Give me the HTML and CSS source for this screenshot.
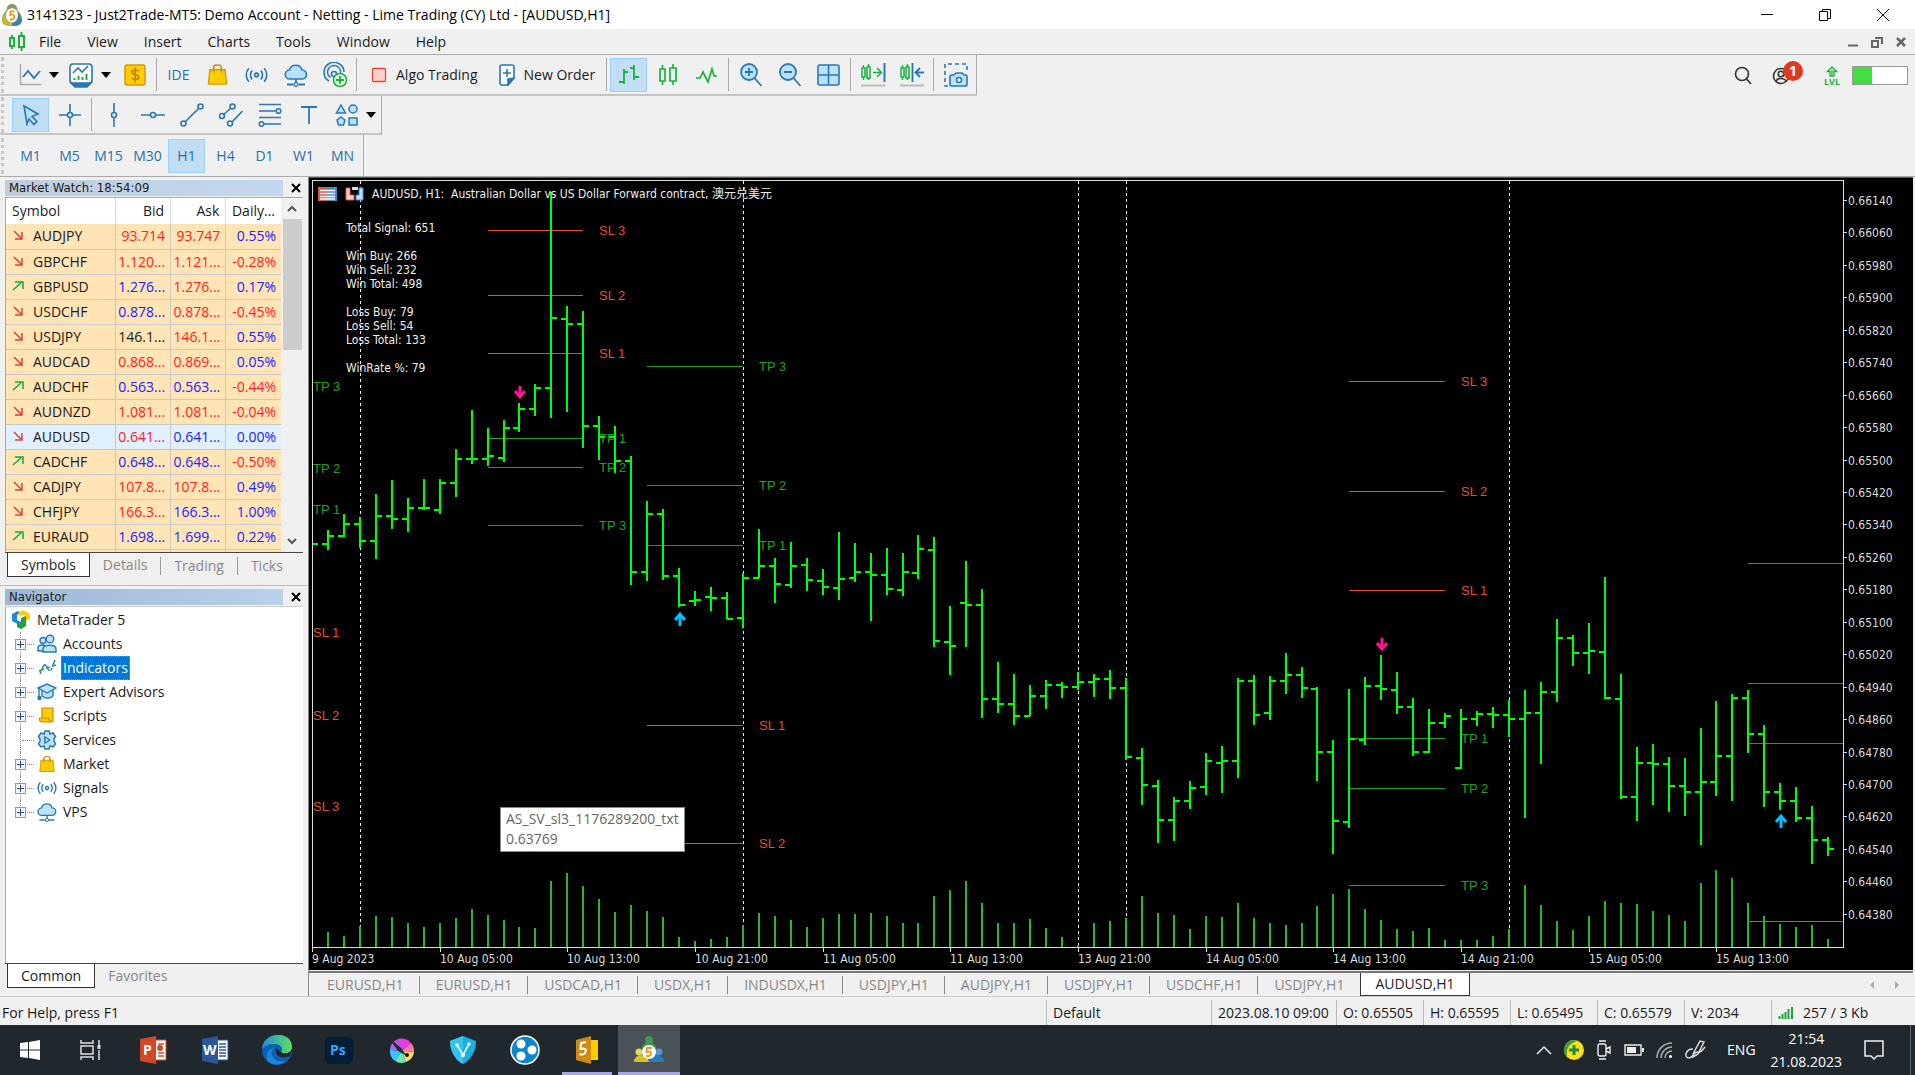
FILE: index.html
```html
<!DOCTYPE html>
<html lang="en">
<head>
	<meta charset="UTF-8">
	<meta name="viewport" content="width=device-width, initial-scale=1.0">
	<title>3141323 - Just2Trade-MT5</title>
	<link rel="stylesheet" href="styles.css">
</head>
<body>

	<!-- shared icons -->
	<svg class="sprite" width="0" height="0">
		<symbol id="i-bag" viewBox="0 0 24 24">
			<path d="M8 9V5a3 3 0 0 1 3-3h2a3 3 0 0 1 3 3v4" fill="none" stroke="#c98f00" stroke-width="1.6"/>
			<path d="M4 7h16l1.500 15h-19z" fill="#ffcc00" stroke="#d39a08" stroke-width="1.400"/>
			<path d="M8 10V5M16 10V5" stroke="#c98f00" stroke-width="1.500"/>
		</symbol>
		<symbol id="i-signal" viewBox="0 0 24 24">
			<g fill="none" stroke="#2a78b0" stroke-width="1.700">
				<circle cx="12" cy="12" r="2" fill="#b9e2ff"/>
				<path d="M7.500 7.500a6.500 6.500 0 0 0 0 9M16.500 7.500a6.500 6.500 0 0 1 0 9M4 5a10.500 10.500 0 0 0 0 14M20 5a10.500 10.500 0 0 1 0 14"/>
			</g>
		</symbol>
		<symbol id="i-cloud" viewBox="0 0 24 24">
			<path d="M6 16a4.500 4.500 0 0 1-.500-9 6.500 6.500 0 0 1 12.500 0 4.500 4.500 0 0 1 0 9z" fill="#b9e2ff" stroke="#2a78b0" stroke-width="1.600"/>
			<path d="M12 16v4M3 21.500h6.500M14.500 21.500H21" stroke="#2a78b0" stroke-width="1.800"/>
			<circle cx="12" cy="21.500" r="1.800" fill="#fff" stroke="#2a78b0" stroke-width="1.300"/>
		</symbol>
		<symbol id="i-down" viewBox="0 0 12 12">
			<path d="M2 2l7 7M10 3v7H3" fill="none" stroke="#d8433a" stroke-width="1.500"/>
		</symbol>
		<symbol id="i-up" viewBox="0 0 12 12">
			<path d="M1 10l8-7M3 2h8v7" fill="none" stroke="#17a53a" stroke-width="1.500"/>
		</symbol>
		<symbol id="i-logo" viewBox="0 0 22 24">
			<path d="M11 0c4 0 6 3 6 7 4 3 5 7 5 11-1 5-6 6-11 6S1 23 0 18c0-4 1-8 5-11 0-4 2-7 6-7z" fill="#8b9b63"/>
			<path d="M4 10c-3 3-5 8-3 11 2 3 7 3 10 3V12z" fill="#c9b53b"/>
			<path d="M18 10c3 3 5 8 3 11-2 3-7 3-10 3V12z" fill="#3f80a8"/>
			<ellipse cx="11" cy="12.500" rx="6.500" ry="8" fill="#fff"/>
			<path d="M14 8H9.500L9 12c3-1.500 5 0 4.500 2.500s-3 3-5 2" fill="none" stroke="#e2a11b" stroke-width="2"/>
		</symbol>
	</svg>

	<header class="titlebar">
		<svg class="app-icon" width="20" height="24"><use href="#i-logo"/></svg>
		<h1>3141323 - Just2Trade-MT5: Demo Account - Netting - Lime Trading (CY) Ltd - [AUDUSD,H1]</h1>
		<div class="window-buttons">
			<button aria-label="Minimize"><svg width="14" height="14"><path d="M1 6.500h12" stroke="#000"/></svg></button>
			<button aria-label="Restore"><svg width="14" height="14" fill="none" stroke="#000"><path d="M1.500 3.500h8v9h-8zM4.500 3.500v-2h8v9h-3"/></svg></button>
			<button aria-label="Close"><svg width="14" height="14"><path d="M1 1l12 12M13 1L1 13" stroke="#000"/></svg></button>
		</div>
	</header>

	<nav class="menubar">
		<svg width="18" height="20" viewBox="0 0 18 20" fill="none" stroke="#19b33c" stroke-width="2"><path d="M2 6h4v8H2zM4 3v3M4 14v3M11 4h5v11h-5zM13.500 0v4M13.500 15v4"/></svg>
		<button>File</button>
		<button>View</button>
		<button>Insert</button>
		<button>Charts</button>
		<button>Tools</button>
		<button>Window</button>
		<button>Help</button>
		<div class="child-buttons">
			<button aria-label="Minimize chart"><svg width="12" height="12"><path d="M1 9.500h10" stroke="#666" stroke-width="2"/></svg></button>
			<button aria-label="Restore chart"><svg width="12" height="12" fill="none" stroke="#666" stroke-width="2"><path d="M1 5h6v6H1zM4 2h7v6"/></svg></button>
			<button aria-label="Close chart"><svg width="12" height="12"><path d="M2 2l8 8M10 2l-8 8" stroke="#666" stroke-width="2.500"/></svg></button>
		</div>
	</nav>

	<div class="toolbar-row">
		<div class="toolbar">
			<button class="tool combo" aria-label="Line studies">
				<svg width="24" height="24" fill="none"><path d="M2.500 1v20.500H23" stroke="#aaa" stroke-width="1.500"/><path d="M5 14l5-6 6 7 6-7" stroke="#2a78b0" stroke-width="1.800"/></svg>
				<i class="caret"></i>
			</button>
			<button class="tool combo" aria-label="Profiles">
				<svg width="26" height="26" fill="none" stroke="#2a78b0" stroke-width="1.600"><path d="M3 21h20l-4 4H7z" fill="#2a78b0"/><rect x="2" y="2" width="22" height="19" rx="3" fill="#fff"/><path d="M5 11l5-5 4 4 6-6"/><path d="M6.500 16v2M10.500 14v4M14.500 15v3M18.500 12v6" stroke="#19b33c" stroke-width="2"/></svg>
				<i class="caret"></i>
			</button>
			<button class="tool" aria-label="Market Watch">
				<svg width="22" height="22"><rect x="1" y="1" width="20" height="20" rx="2" fill="#fc0" stroke="#d39a08" stroke-width="1.500"/><path d="M14.500 7.500c-1-2-6.500-2-6.500.700 0 3.300 6.800 1.800 6.800 5 0 2.800-5.800 3-7 .500M11.300 3.500v15" fill="none" stroke="#b98300" stroke-width="1.500"/></svg>
			</button>
			<span class="sep"></span>
			<button class="tool ide">IDE</button>
			<button class="tool" aria-label="Market"><svg width="23" height="23"><use href="#i-bag"/></svg></button>
			<button class="tool" aria-label="Signals"><svg width="23" height="24"><use href="#i-signal"/></svg></button>
			<button class="tool" aria-label="VPS"><svg width="24" height="24"><use href="#i-cloud"/></svg></button>
			<button class="tool" aria-label="Virtual hosting">
				<svg width="26" height="26" fill="none" stroke="#2a78b0" stroke-width="1.600"><path d="M7 19A10 10 0 1 1 22 10M8.500 15.500A6.500 6.500 0 1 1 18.500 11"/><circle cx="12" cy="12" r="2.500"/><circle cx="18" cy="18" r="6.500" fill="#eaffea" stroke="#19b33c"/><path d="M18 14v8M14 18h8" stroke="#19b33c" stroke-width="1.800"/></svg>
			</button>
			<span class="sep"></span>
			<button class="tool text-tool"><svg width="16" height="16"><rect x="1.500" y="1.500" width="13" height="13" rx="1" fill="#ffd3cc" stroke="#e0443a" stroke-width="1.300"/></svg>Algo Trading</button>
			<button class="tool text-tool"><svg width="16" height="22" fill="none" stroke="#2a78b0" stroke-width="1.600"><path d="M3 1h10a2 2 0 0 1 2 2v11l-6 7H3a2 2 0 0 1-2-2V3a2 2 0 0 1 2-2z" fill="#fff"/><path d="M15 14l-6 7v-6z" fill="#2a78b0"/><path d="M4 9h8M8 5v8"/></svg>New Order</button>
			<span class="sep"></span>
			<button class="tool active" aria-label="Bar chart"><svg width="24" height="24" fill="none" stroke="#19b33c" stroke-width="1.800"><path d="M7 6v15M2 19h5M7 9h4M17 2v15M13 5h4M17 14h5"/></svg></button>
			<button class="tool" aria-label="Candlesticks"><svg width="20" height="22" fill="none" stroke="#19b33c" stroke-width="1.700"><path d="M2 5h5v12H2zM4.500 1v4M4.500 17v4M12 4h6v13h-6zM15 0v4M15 17v4"/></svg></button>
			<button class="tool" aria-label="Line chart"><svg width="24" height="20" fill="none" stroke="#19b33c" stroke-width="1.700"><path d="M1 13h4l3-6 5 10 4-13 2 7h3"/></svg></button>
			<span class="sep"></span>
			<button class="tool" aria-label="Zoom in"><svg width="24" height="24" fill="none" stroke="#2a78b0" stroke-width="1.800"><circle cx="10" cy="9" r="8" fill="#b9e2ff"/><path d="M6 9h8M10 5v8M15.500 15l7 8"/></svg></button>
			<button class="tool" aria-label="Zoom out"><svg width="24" height="24" fill="none" stroke="#2a78b0" stroke-width="1.800"><circle cx="10" cy="9" r="8" fill="#b9e2ff"/><path d="M6 9h8M15.500 15l7 8"/></svg></button>
			<button class="tool" aria-label="Tile windows"><svg width="24" height="24" fill="none" stroke="#2a78b0" stroke-width="1.600"><rect x="1" y="2" width="21" height="20" rx="2" fill="#b9e2ff"/><path d="M11.500 2v20M1 12h21"/></svg></button>
			<span class="sep"></span>
			<button class="tool" aria-label="Auto scroll"><svg width="26" height="26" fill="none" stroke="#19b33c" stroke-width="1.500"><path d="M2 6h3v9H2zM3.500 3v3M3.500 15v3M7 5h3v11H7zM8.500 2v3M8.500 16v2M13 10.500h8M17 6l4.500 4.500L17 15"/><path d="M24.500 1v19" stroke="#2a78b0" stroke-width="2"/><path d="M1 23.500h24" stroke="#bbb" stroke-width="2"/></svg></button>
			<button class="tool" aria-label="Chart shift"><svg width="26" height="26" fill="none" stroke="#19b33c" stroke-width="1.500"><path d="M2 6h3v9H2zM3.500 3v3M3.500 15v3M7 5h3v11H7zM8.500 2v3M8.500 16v2"/><path d="M13.500 1v19M25 10.500h-8M21 6l-4.500 4.500L21 15" stroke="#2a78b0" stroke-width="1.800"/><path d="M1 23.500h24" stroke="#bbb" stroke-width="2"/></svg></button>
			<span class="sep"></span>
			<button class="tool" aria-label="Screenshot"><svg width="26" height="26" fill="none" stroke="#2a78b0" stroke-width="1.600"><path d="M5 24H2V2h22v7" stroke-dasharray="4 3"/><path d="M8 24a1 1 0 0 1-1-1v-8a2 2 0 0 1 2-2h2l2-2h6l2 2h2a2 2 0 0 1 1 2v8a1 1 0 0 1-1 1z" fill="#b9e2ff"/><circle cx="16" cy="18" r="2.500" fill="#fff"/></svg></button>
		</div>
		<div class="account-tools">
			<button aria-label="Search"><svg width="18" height="20" fill="none" stroke="#333" stroke-width="1.600"><circle cx="8" cy="8" r="6.500"/><path d="M12.500 13l4.500 5"/></svg></button>
			<button class="profile" aria-label="Profile"><svg width="18" height="18" fill="none" stroke="#333" stroke-width="1.600"><circle cx="9" cy="9" r="7.500"/><circle cx="9" cy="7" r="2.700"/><path d="M4 14.500c1-4 9-4 10 0"/></svg><span class="badge">1</span></button>
			<button class="lvl" aria-label="Level"><svg width="12" height="11"><path d="M6 1l4.500 4.500H8V10H4V5.500H1.500zM6 4v5" fill="none" stroke="#19b33c" stroke-width="1.300"/></svg><span>LVL</span></button>
			<div class="meter"><span></span></div>
		</div>
	</div>

	<div class="toolbar-row drawing">
		<div class="toolbar">
			<button class="tool active" aria-label="Cursor"><svg width="20" height="22"><path d="M3 2l14 8-6 2.500 5 5-3 3-5-5.500-2 5z" fill="#b9e2ff" stroke="#2a78b0" stroke-width="1.600"/></svg></button>
			<button class="tool" aria-label="Crosshair"><svg width="22" height="22" fill="none" stroke="#2a78b0" stroke-width="1.600"><path d="M11 0v8M11 14v8M0 11h8M14 11h8"/><circle cx="11" cy="11" r="2.500"/></svg></button>
			<span class="sep"></span>
			<button class="tool" aria-label="Vertical line"><svg width="22" height="24" fill="none" stroke="#2a78b0" stroke-width="1.600"><path d="M11 0v9M11 15v9"/><circle cx="11" cy="12" r="2.500"/></svg></button>
			<button class="tool" aria-label="Horizontal line"><svg width="24" height="22" fill="none" stroke="#2a78b0" stroke-width="1.600"><path d="M0 11h9M15 11h9"/><circle cx="12" cy="11" r="2.500"/></svg></button>
			<button class="tool" aria-label="Trendline"><svg width="24" height="24" fill="none" stroke="#2a78b0" stroke-width="1.600"><path d="M5 19L19 5"/><circle cx="3.500" cy="20.500" r="2.500"/><circle cx="20.500" cy="3.500" r="2.500"/></svg></button>
			<button class="tool" aria-label="Channel"><svg width="24" height="24" fill="none" stroke="#2a78b0" stroke-width="1.600"><path d="M4 12l8-7M13 19L23.500 8"/><circle cx="3" cy="13" r="2.500"/><circle cx="13.500" cy="3.500" r="2.500"/><circle cx="11" cy="20.500" r="2.500"/></svg></button>
			<button class="tool" aria-label="Fibonacci"><svg width="24" height="24" fill="none" stroke="#2a78b0" stroke-width="1.600"><path d="M1 1.500h22M1 8h17M1 14.500h22M6 21h17"/><circle cx="20.500" cy="8" r="2.300"/><circle cx="3.500" cy="21" r="2.300"/></svg></button>
			<button class="tool" aria-label="Text"><svg width="18" height="20"><path d="M1 2h16M9 2v17" stroke="#2a78b0" stroke-width="1.800"/></svg></button>
			<button class="tool combo" aria-label="Shapes"><svg width="24" height="24" fill="#b9e2ff" stroke="#2a78b0" stroke-width="1.500"><path d="M6 2l4.500 8h-9z"/><circle cx="18" cy="6" r="4"/><path d="M6 14l4 3-1.500 5h-5L2 17z"/><rect x="14" y="15" width="8" height="7"/></svg><i class="caret"></i></button>
		</div>
	</div>

	<div class="toolbar-row">
		<div class="toolbar periods">
			<button class="tool">M1</button>
			<button class="tool">M5</button>
			<button class="tool">M15</button>
			<button class="tool">M30</button>
			<button class="tool active">H1</button>
			<button class="tool">H4</button>
			<button class="tool">D1</button>
			<button class="tool">W1</button>
			<button class="tool">MN</button>
		</div>
	</div>

	<main>
		<aside>
			<section class="panel market-watch">
				<h2><span>Market Watch: 18:54:09</span><button aria-label="Close Market Watch"><svg width="10" height="10"><path d="M1 1l8 8M9 1L1 9" stroke="#000" stroke-width="2"/></svg></button></h2>
				<div class="watch-body">
					<div class="watch-scroll">
						<table>
							<thead>
								<tr><th class="symbol">Symbol</th><th>Bid</th><th>Ask</th><th>Daily...</th></tr>
							</thead>
							<tbody id="quotes"></tbody>
						</table>
					</div>
					<div class="scrollbar">
						<button aria-label="Scroll up"><svg width="10" height="7"><path d="M1 6l4-4 4 4" fill="none" stroke="#555" stroke-width="2"/></svg></button>
						<div class="thumb"></div>
						<button aria-label="Scroll down"><svg width="10" height="7"><path d="M1 1l4 4 4-4" fill="none" stroke="#555" stroke-width="2"/></svg></button>
					</div>
				</div>
				<div class="panel-tabs">
					<button class="current">Symbols</button>
					<button>Details</button>
					<button>Trading</button>
					<button>Ticks</button>
				</div>
			</section>

			<section class="panel navigator">
				<h2><span>Navigator</span><button aria-label="Close Navigator"><svg width="10" height="10"><path d="M1 1l8 8M9 1L1 9" stroke="#000" stroke-width="2"/></svg></button></h2>
				<div class="tree">
					<div class="root">
						<svg width="20" height="20" viewBox="0 0 20 20"><path d="M1 4l6-3 3 2-4 2v5l4 2v4L1 11z" fill="#1f86d8"/><path d="M7 3l5-3 7 4v5l-4 2V6l-3-1-3 1z" fill="#fc0"/><path d="M10 8l5-2v10l-5 3-4-2v-4l4 1z" fill="#19a53a"/></svg>
						MetaTrader 5
					</div>
					<ul>
						<li><i class="plus"></i><svg width="20" height="20" viewBox="0 0 20 20" fill="#b9e2ff" stroke="#2a78b0" stroke-width="1.400"><circle cx="6" cy="6.500" r="3"/><path d="M1 17v-3c0-4 8-4 9 0v3z"/><circle cx="13" cy="5" r="3.800"/><path d="M6 18v-3c0-5 13-5 13 0v3z"/></svg><span>Accounts</span></li>
						<li class="selected"><i class="plus"></i><svg width="20" height="20" viewBox="0 0 20 20" fill="none" stroke-width="1.500"><path d="M3 16l3-7c2-4 3-2 5 2s4 0 5-4l2-5" stroke="#2a78b0" stroke-dasharray="3 1 14 1"/><path d="M2 13l5-2M9 10l4-1M15 8l4-1" stroke="#19b33c"/></svg><span>Indicators</span></li>
						<li><i class="plus"></i><svg width="20" height="20" viewBox="0 0 20 20" fill="#b9e2ff" stroke="#2a78b0" stroke-width="1.400"><path d="M5 8v6c3 3 8 3 11 0V8"/><path d="M1 6l9-4 9 4-9 5z"/><path d="M2 6v9" fill="none"/><circle cx="2.500" cy="16" r="1.500" fill="#2a78b0"/></svg><span>Expert Advisors</span></li>
						<li><i class="plus"></i><svg width="20" height="20" viewBox="0 0 20 20" fill="#fc0" stroke="#c98f00" stroke-width="1.200"><path d="M5 2h11v13H5z"/><path d="M3 12h9v4h4H5c-3 0-3-4-2-4z"/></svg><span>Scripts</span></li>
						<li class="leaf"><i></i><svg width="20" height="20" viewBox="0 0 20 20" fill="#b9e2ff" stroke="#2a78b0" stroke-width="1.500"><path d="M8 1h4l1 3 3-1 2.500 3.500L17 9v2l1.500 3-2.500 3-3-1-1 3H8l-1-3-3 1-2.500-3L3 11V9L1.500 6.500 4 3l3 1z"/><path d="M8 7l4.500 3L8 13z" fill="#fff"/></svg><span>Services</span></li>
						<li><i class="plus"></i><svg width="20" height="18"><use href="#i-bag"/></svg><span>Market</span></li>
						<li><i class="plus"></i><svg width="20" height="20"><use href="#i-signal"/></svg><span>Signals</span></li>
						<li><i class="plus"></i><svg width="20" height="20"><use href="#i-cloud"/></svg><span>VPS</span></li>
					</ul>
				</div>
				<div class="panel-tabs">
					<button class="current">Common</button>
					<button>Favorites</button>
				</div>
			</section>
		</aside>

		<section class="charts">
			<div class="chart">
				<svg id="chart"></svg>
				<div class="chart-title">
					<svg width="19" height="14"><rect width="9" height="14" fill="#e2574c"/><rect x="9" width="10" height="14" fill="#3b8fd0"/><path d="M2 3.500h15M2 6.500h15M2 9.500h15M2 12h15" stroke="#fff" stroke-width="1.500"/></svg>
					<svg width="19" height="14"><path d="M1 1h4v7h4v5H1z" fill="#ffd3cc" stroke="#e2574c"/><path d="M14 1h4v12h-7V8h3z" fill="#b9e2ff" stroke="#3b8fd0"/><path d="M7 0h6v3H7z" fill="#ddd"/></svg>
					<span>AUDUSD, H1:&nbsp; Australian Dollar vs US Dollar Forward contract, 澳元兑美元</span>
				</div>
				<div class="stats">
					<p>Total Signal: 651</p>
					<p>Win Buy: 266<br>Win Sell: 232<br>Win Total: 498</p>
					<p>Loss Buy: 79<br>Loss Sell: 54<br>Loss Total: 133</p>
					<p>WinRate %: 79</p>
				</div>
				<div class="tooltip">AS_SV_sl3_1176289200_txt<br>0.63769</div>
			</div>
			<div class="chart-tabs">
				<button>EURUSD,H1</button>
				<button>EURUSD,H1</button>
				<button>USDCAD,H1</button>
				<button>USDX,H1</button>
				<button>INDUSDX,H1</button>
				<button>USDJPY,H1</button>
				<button>AUDJPY,H1</button>
				<button>USDJPY,H1</button>
				<button>USDCHF,H1</button>
				<button>USDJPY,H1</button>
				<button class="current">AUDUSD,H1</button>
				<div class="tab-arrows"><i class="prev"></i><i class="next"></i></div>
			</div>
		</section>
	</main>

	<div class="statusbar">
		<span class="help">For Help, press F1</span>
		<span class="profile-name">Default</span>
		<span class="date">2023.08.10 09:00</span>
		<span>O: 0.65505</span>
		<span>H: 0.65595</span>
		<span>L: 0.65495</span>
		<span>C: 0.65579</span>
		<span>V: 2034</span>
		<span class="traffic"><svg width="16" height="14"><path d="M1.500 10v3M4.500 8v5M7.500 6v7M10.500 3v10" stroke="#19a53a" stroke-width="2"/><path d="M14 1v12" stroke="#19a53a" stroke-width="2"/></svg>257 / 3 Kb</span>
	</div>

	<footer class="taskbar">
		<button class="start" aria-label="Start"><svg width="20" height="20" fill="#fff"><path d="M0 3l8-1v7.500H0zM9 2l11-2v9.500H9zM0 10.500h8V18l-8-1zM9 10.500h11V20L9 18z"/></svg></button>
		<button aria-label="Task view"><svg width="22" height="20" fill="none" stroke="#ddd" stroke-width="1.500"><path d="M1 0v3h12V0M1 6h12v8H1zM1 20v-3h12v3M19 0v5M19 10v10"/><path d="M19 5v4" stroke-width="3"/></svg></button>
		<button aria-label="PowerPoint"><svg width="28" height="28" viewBox="0 0 28 28"><path d="M16 4h11v20H16z" fill="#fff" stroke="#d24726"/><path d="M19 8h6M19 17h6M19 20h6" stroke="#d24726" stroke-width="1.500"/><circle cx="21" cy="12" r="3" fill="#d24726"/><path d="M1 3l16-3v28L1 25z" fill="#d24726"/><text x="4" y="19" class="office">P</text></svg></button>
		<button aria-label="Word"><svg width="28" height="28" viewBox="0 0 28 28"><path d="M16 4h11v20H16z" fill="#fff" stroke="#2b579a"/><path d="M18 8h7M18 11h7M18 14h7M18 17h7M18 20h7" stroke="#2b579a" stroke-width="1.500"/><path d="M1 3l16-3v28L1 25z" fill="#2b579a"/><text x="2" y="19" class="office">W</text></svg></button>
		<button aria-label="Edge"><svg width="30" height="30" viewBox="0 0 30 30">
			<defs><linearGradient id="edge"><stop offset="0" stop-color="#1c8fdc"/><stop offset="1" stop-color="#5fe05a"/></linearGradient></defs>
			<circle cx="15" cy="15" r="15" fill="#0c5fb3"/><path d="M0 14C1-4 30-5 30 12c0 7-10 8-11 5 3-4-1-8-6-8C7 9 2 11 0 14z" fill="url(#edge)"/><path d="M12 13c-6 6 0 16 12 13-4 4-12 5-17 1S6 13 12 13z" fill="#1b86dd"/><path d="M14 13c-2 7 5 12 14 8l2-7c-3 6-10 5-11 3z" fill="#20282d"/></svg></button>
		<button aria-label="Photoshop"><svg width="28" height="27"><rect width="28" height="27" rx="5" fill="#001e36"/><text x="5" y="18" class="ps">Ps</text></svg></button>
		<button aria-label="Krita"><svg width="28" height="28" viewBox="0 0 28 28"><path d="M15 15L9 4A12 12 0 0 1 24 7z" fill="#e83be8"/><path d="M15 15l9-8a12 12 0 0 1 3 9z" fill="#ff7aa0"/><path d="M15 15l12 1a12 12 0 0 1-8 10z" fill="#ffd76a"/><path d="M15 15l4 11a12 12 0 0 1-11-1z" fill="#69e7b0"/><path d="M15 15l-7 10a12 12 0 0 1-5-11z" fill="#3bc6ff"/><path d="M15 15L3 14A12 12 0 0 1 9 4z" fill="#a46bff"/><path d="M0 0l14 12 6 8-9-5z" fill="#222b33"/><circle cx="20" cy="19" r="2" fill="#111"/></svg></button>
		<button aria-label="VPN"><svg width="28" height="28" viewBox="0 0 28 28"><path d="M14 0l13 5c0 10-5 19-13 23C6 24 1 15 1 5z" fill="#18b0e2"/><path d="M14 0v28C6 24 1 15 1 5z" fill="#35c3ee"/><path d="M8 9l6 10 6-11" fill="none" stroke="#e4f7ff" stroke-width="1.600"/><g fill="#e4f7ff"><circle cx="8" cy="9" r="1.800"/><circle cx="14" cy="19" r="2.200"/><circle cx="20" cy="8" r="1.800"/></g></svg></button>
		<button aria-label="Remote"><svg width="30" height="30"><circle cx="15" cy="15" r="14" fill="#0c85cf" stroke="#fff" stroke-width="1.500"/><g fill="#fff"><circle cx="11" cy="9" r="4.500"/><circle cx="22" cy="15" r="4.500"/><circle cx="11" cy="21" r="4.500"/></g></svg></button>
		<button class="running" aria-label="MetaEditor"><svg width="24" height="28" viewBox="0 0 24 28"><path d="M12 4h11v20H12z" fill="#fc0"/><path d="M1 4l15-4v28L1 24z" fill="#d08a10"/><path d="M11 6L6 7l-.500 6c4-1.500 6 0 5 3s-4 3-6 2" fill="none" stroke="#fff" stroke-width="2"/></svg></button>
		<button class="running focused" aria-label="MetaTrader"><svg width="30" height="28" viewBox="0 0 30 28"><circle cx="15" cy="4" r="4" fill="#3f9a50"/><path d="M8 12c0-7 14-7 14 0v4H8z" fill="#3f9a50"/><circle cx="5" cy="16" r="3.500" fill="#e6d560"/><path d="M0 26c0-9 14-9 15 0z" fill="#d9c22a"/><circle cx="25" cy="16" r="3.500" fill="#4f97d6"/><path d="M15 26c0-9 15-9 15 0z" fill="#2c7cc0"/><circle cx="15" cy="16" r="7" fill="#fff"/><path d="M18 12h-5l-.500 4c4-1 5 0 4.500 2s-3 2.500-5 1.500" fill="none" stroke="#eba019" stroke-width="2"/></svg></button>

		<div class="tray">
			<button aria-label="Hidden icons"><svg width="16" height="10"><path d="M1 9l7-7 7 7" fill="none" stroke="#eee" stroke-width="1.500"/></svg></button>
			<button aria-label="Updater"><svg width="20" height="20"><circle cx="10" cy="10" r="10" fill="#ffdf1b"/><path d="M10 0a10 10 0 0 0-7 17c-1-9 2-13 10-16z" fill="#3aa13a"/><path d="M10 5v10M5 10h10" stroke="#1b8b3a" stroke-width="3"/></svg></button>
			<button aria-label="Meet now"><svg width="16" height="20" fill="none" stroke="#eee" stroke-width="1.400"><rect x="2" y="4" width="8" height="12" rx="2"/><path d="M10 9l4-2v6l-4-2M3 1h7M3 19h7"/></svg></button>
			<button aria-label="Battery"><svg width="20" height="12"><path d="M1 1h16v10H1z" fill="none" stroke="#eee" stroke-width="1.400"/><path d="M3 3h9v6H3zM18 4h2v4h-2z" fill="#eee"/></svg></button>
			<button aria-label="Network"><svg width="17" height="17" fill="none" stroke="#aaa" stroke-width="1.500"><path d="M1 16A15 15 0 0 1 16 1M5 16A11 11 0 0 1 16 5M9 16a7 7 0 0 1 7-7"/><circle cx="14.500" cy="14.500" r="1.500" fill="#fff" stroke="none"/></svg></button>
			<button aria-label="Pen"><svg width="22" height="20" fill="none" stroke="#ddd" stroke-width="1.500"><path d="M8 14L15 1l4 1-6 12-5 3zM8 9c-8 0-9 9-4 9s5-7 8-6 4 0 8-5"/></svg></button>
			<span class="lang">ENG</span>
			<span class="clock">21:54<br>21.08.2023</span>
			<button aria-label="Notifications"><svg width="20" height="22"><path d="M1 2h18v15h-6l-3 3-3-3H1z" fill="none" stroke="#eee" stroke-width="1.500"/></svg></button>
			<span class="peek"></span>
		</div>
	</footer>

	<script type="text/javascript">

		// symbol, direction, bid, ask, daily change, colors of bid and ask
		const quotes = [
			['AUDJPY', 'down', '93.714', '93.747', '0.55%', 'red', 'red'],
			['GBPCHF', 'down', '1.120...', '1.121...', '-0.28%', 'red', 'red'],
			['GBPUSD', 'up', '1.276...', '1.276...', '0.17%', 'blue', 'red'],
			['USDCHF', 'down', '0.878...', '0.878...', '-0.45%', 'blue', 'red'],
			['USDJPY', 'down', '146.1...', '146.1...', '0.55%', 'black', 'red'],
			['AUDCAD', 'down', '0.868...', '0.869...', '0.05%', 'red', 'red'],
			['AUDCHF', 'up', '0.563...', '0.563...', '-0.44%', 'blue', 'blue'],
			['AUDNZD', 'down', '1.081...', '1.081...', '-0.04%', 'red', 'red'],
			['AUDUSD', 'down', '0.641...', '0.641...', '0.00%', 'red', 'blue'],
			['CADCHF', 'up', '0.648...', '0.648...', '-0.50%', 'blue', 'blue'],
			['CADJPY', 'down', '107.8...', '107.8...', '0.49%', 'red', 'red'],
			['CHFJPY', 'down', '166.3...', '166.3...', '1.00%', 'red', 'blue'],
			['EURAUD', 'up', '1.698...', '1.699...', '0.22%', 'blue', 'blue']
		]

		document.getElementById('quotes').innerHTML = quotes.map(([name, dir, bid, ask, daily, bidColor, askColor]) => `
			<tr class="${name === 'AUDUSD' ? 'selected' : ''}">
				<td class="symbol"><svg width="12" height="12"><use href="#i-${dir}"/></svg>${name}</td>
				<td class="${bidColor}">${bid}</td>
				<td class="${askColor}">${ask}</td>
				<td class="${daily[0] === '-' ? 'red' : 'blue'}">${daily}</td>
			</tr>`).join('') + '<tr><td class="symbol"></td><td></td><td></td><td></td></tr>'


		// high, low, open, close, volume. Levels are in chart units from the top, volume from the bottom
		const bars = [
			[365, 367, 366, 366, 0], [352, 372, 366, 358, 15], [336, 359, 358, 346, 11], [339, 370, 346, 363, 21],
			[316, 381, 363, 338, 31], [302, 351, 338, 341, 30], [320, 354, 341, 330, 24], [301, 332, 330, 330, 20],
			[301, 336, 332, 305, 24], [271, 319, 305, 281, 29], [232, 286, 281, 281, 38], [250, 288, 281, 278, 32],
			[242, 284, 280, 250, 27], [225, 254, 250, 231, 20], [206, 238, 231, 210, 19], [14, 240, 210, 140, 66],
			[128, 234, 141, 146, 74], [133, 270, 146, 248, 61], [238, 282, 248, 259, 48], [248, 295, 259, 283, 35],
			[278, 406, 283, 394, 42], [323, 402, 394, 336, 36], [331, 401, 336, 397, 30], [390, 428, 397, 426, 10],
			[412, 427, 422, 421, 6], [408, 432, 418, 419, 8], [413, 440, 419, 440, 10], [395, 449, 439, 399, 22],
			[351, 399, 399, 388, 34], [380, 424, 388, 405, 31], [364, 409, 406, 388, 27], [380, 412, 387, 401, 20],
			[391, 416, 402, 408, 29], [354, 421, 409, 400, 33], [365, 403, 399, 394, 33], [375, 442, 394, 396, 34],
			[370, 416, 396, 410, 31], [375, 417, 411, 394, 24], [357, 400, 395, 371, 24], [359, 468, 372, 462, 51],
			[427, 496, 463, 467, 57], [383, 468, 424, 426, 66], [410, 539, 426, 520, 44], [483, 534, 520, 525, 24],
			[495, 546, 525, 537, 24], [506, 537, 537, 517, 28], [501, 530, 517, 506, 19], [503, 519, 506, 508, 10],
			[493, 511, 508, 503, 2], [495, 518, 503, 500, 24], [491, 520, 500, 509, 26], [499, 581, 509, 578, 29],
			[569, 626, 579, 606, 51], [601, 664, 607, 641, 34], [618, 662, 641, 622, 32], [602, 630, 622, 609, 18],
			[574, 616, 608, 582, 31], [567, 614, 584, 582, 30], [499, 599, 582, 502, 44], [496, 546, 502, 536, 29],
			[497, 541, 534, 502, 24], [474, 515, 502, 496, 22], [488, 519, 496, 509, 24], [508, 602, 510, 573, 41],
			[561, 675, 573, 642, 53], [510, 649, 643, 560, 58], [498, 566, 561, 507, 38], [476, 521, 507, 510, 27],
			[493, 535, 511, 528, 18], [519, 577, 528, 573, 16], [530, 574, 573, 544, 19], [534, 549, 544, 537, 7],
			[530, 590, 589, 540, 7], [532, 547, 540, 535, 7], [528, 549, 535, 536, 11], [521, 558, 536, 540, 18],
			[511, 639, 540, 534, 62], [503, 585, 534, 513, 42], [440, 523, 513, 459, 26], [456, 487, 459, 474, 17],
			[444, 495, 474, 472, 31], [398, 520, 473, 519, 46], [495, 620, 520, 618, 44], [568, 642, 618, 584, 43],
			[565, 626, 584, 585, 36], [578, 633, 585, 607, 32], [579, 637, 607, 613, 26], [549, 666, 613, 603, 64],
			[522, 617, 603, 577, 77], [515, 622, 577, 519, 69], [511, 574, 519, 555, 44], [546, 628, 555, 613, 31],
			[604, 631, 613, 622, 23], [608, 643, 622, 639, 20], [627, 685, 639, 661, 22], [658, 677, 661, 670, 8]
		]

		const separators = [3, 27, 48, 51, 75]

		// text, first bar, last bar, level
		const levels = [
			['SL 3', 11, 17, 52], ['SL 2', 11, 17, 117], ['SL 1', 11, 17, 175],
			['TP 1', 11, 17, 260], ['TP 2', 11, 17, 289], ['TP 3', 11, 17, 347],
			['TP 3', 21, 27, 188], ['TP 2', 21, 27, 307], ['TP 1', 21, 27, 367],
			['SL 1', 21, 27, 546], ['SL 2', 21, 27, 664],
			['SL 3', 65, 71, 203], ['SL 2', 65, 71, 313], ['SL 1', 65, 71, 411],
			['TP 1', 65, 71, 559], ['TP 2', 65, 71, 609], ['TP 3', 65, 71, 706],
			['TP', 90, 96, 385], ['TP', 90, 96, 504], ['TP', 90, 96, 564], ['SL', 90, 96, 742],
			['TP 3', -7, -1, 208], ['TP 2', -7, -1, 290], ['TP 1', -7, -1, 331],
			['SL 1', -7, -1, 453], ['SL 2', -7, -1, 536], ['SL 3', -7, -1, 627]
		]

		// direction, bar, level
		const arrows = [['sell', 13, 214], ['buy', 23, 440], ['sell', 67, 465], ['buy', 92, 642]]

		const dates = ['9 Aug 2023', '10 Aug 05:00', '10 Aug 13:00', '10 Aug 21:00', '11 Aug 05:00', '11 Aug 13:00',
			'13 Aug 21:00', '14 Aug 05:00', '14 Aug 13:00', '14 Aug 21:00', '15 Aug 05:00', '15 Aug 13:00']

		const WIDTH = 1604
		const HEIGHT = 791
		const $chart = document.getElementById('chart')

		function draw () {
			const sx = $chart.clientWidth / WIDTH
			const sy = $chart.clientHeight / HEIGHT
			const left = 4
			const right = $chart.clientWidth - 70
			const bottom = $chart.clientHeight - 23
			const barX = i => Math.round((3 + i * 15.96) * sx)
			const y = v => Math.round(v * sy)
			const out = []

			const line = (cls, x1, y1, x2, y2) => out.push(`<path class="${cls}" d="M${x1} ${y1}L${x2} ${y2}"/>`)
			const text = (cls, x, ty, str) => out.push(`<text class="${cls}" x="${x}" y="${ty}">${str}</text>`)

			separators.forEach(i => line('separator', barX(i) + .5, 3, barX(i) + .5, bottom))

			bars.forEach(([high, low, open, close, volume], i) => {
				const x = barX(i)
				if (volume) line('volume', x, bottom - y(volume), x, bottom)
			})

			levels.forEach(([label, from, to, v]) => {
				const cls = label.slice(0, 2).toLowerCase()
				if (to > 0) line('level ' + cls, barX(from), y(v) + .5, Math.min(barX(to), right), y(v) + .5)
				if (label.length > 2) text('label ' + cls, to > 0 ? barX(to + 1) : left, y(v) + 5, label)
			})

			bars.forEach(([high, low, open, close], i) => {
				const x = barX(i)
				if (i) {
					line('bar', x, y(high), x, y(low))
					line('bar', x - 6, y(open), x, y(open))
				}
				line('bar', x, y(close), x + 6, y(close))
			})

			arrows.forEach(([cls, i, v]) => {
				const d = cls === 'sell' ? 'M0 -6V4M-5 -1L0 5L5 -1' : 'M0 7V-4M-5 1L0 -5L5 1'
				out.push(`<path class="${cls}" transform="translate(${barX(i) + 1} ${y(v)})" d="${d}"/>`)
			})

			out.push(`<path class="frame" d="M${left - .5} ${bottom}V2.5H${right + .5}V${bottom + .5}H${left - .5}"/>`)

			for (let i = 0; i < 23; i ++) {
				const ty = y(22 + i * 32.4)
				line('frame', right, ty + .5, right + 4, ty + .5)
				text('axis', right + 5, ty + 5, (0.6614 - i * 0.0008).toFixed(5))
			}

			dates.forEach((date, i) => {
				const x = i ? barX(i * 8) : 3
				line('frame', x + .5, bottom, x + .5, bottom + 5)
				text('axis', x, bottom + 16, date)
			})

			$chart.innerHTML = out.join('')
		}

		draw()
		window.addEventListener('resize', draw)

	</script>
</body>
</html>
```

FILE: styles.css
```css
html, body {
	padding: 0;
	margin: 0;
}

body {
	background: #f0f0f0;
	color: #1a1a1a;
	display: flex;
	flex-direction: column;
	font: 14px/20px "Open Sans", "Noto Sans", "Noto Sans CJK SC", sans-serif;
	height: 100vh;
	overflow: hidden;
}

* {
	box-sizing: border-box;
}

button {
	background: none;
	border: 0;
	color: inherit;
	font: inherit;
	margin: 0;
	padding: 0;
}

svg {
	display: block;
	flex: none;
}

h1, h2, p, ul {
	font: inherit;
	list-style: none;
	margin: 0;
	padding: 0;
}

.sprite {
	position: absolute;
}


/* Title and menu */

.titlebar {
	align-items: center;
	background: #fff;
	color: #000;
	display: flex;
	flex: none;
	gap: 5px;
	height: 29px;
	padding: 0 3px 0 2px;
}

.window-buttons {
	display: flex;
	margin-left: auto;
}

.window-buttons button {
	display: grid;
	height: 29px;
	place-items: center;
	width: 58px;
}

.menubar {
	align-items: center;
	border-bottom: 1px solid #aaa;
	display: flex;
	flex: none;
	height: 26px;
	padding-left: 8px;
}

.menubar > button {
	padding: 0 13px;
}

.child-buttons {
	display: flex;
	gap: 12px;
	margin-left: auto;
	padding-right: 8px;
}


/* Toolbars */

.toolbar-row {
	display: flex;
	flex: none;
	height: 41px;
	justify-content: space-between;
}

.toolbar-row.drawing {
	height: 39px;
}

.toolbar {
	align-items: center;
	border-bottom: 2px solid #c4c4c4;
	border-right: 1px solid #aaa;
	display: flex;
	gap: 2px;
	padding: 0 2px 0 12px;
	position: relative;
}

.toolbar.periods {
	border-bottom: 0;
}

/* grip */
.toolbar::before {
	border-left: 3px dotted #c8c8c8;
	content: "";
	height: 36px;
	left: 1px;
	position: absolute;
	width: 0;
}

.tool {
	align-items: center;
	border: 1px solid transparent;
	display: flex;
	height: 34px;
	justify-content: center;
	width: 37px;
}

.tool.active {
	background: #c2def4;
	border-color: #99d1ff;
}

.tool.combo {
	gap: 7px;
	justify-content: flex-end;
	padding-right: 2px;
	width: 50px;
}

.caret {
	border: 5px solid transparent;
	border-bottom: 0;
	border-top: 6px solid #000;
}

.text-tool {
	gap: 9px;
	padding: 0 7px 0 10px;
	width: auto;
}

.ide, .periods .tool {
	color: #2470a8;
}

.sep {
	background: #aaa;
	height: 33px;
	margin: 0 1px;
	width: 1px;
}

.account-tools {
	align-items: center;
	display: flex;
	gap: 20px;
	padding-right: 7px;
}

.profile {
	margin-right: 14px;
	position: relative;
}

.badge {
	background: #e03a1e;
	border-radius: 10px;
	color: #fff;
	font-size: 14px;
	font-weight: bold;
	height: 20px;
	left: 11px;
	position: absolute;
	text-align: center;
	top: -6px;
	width: 20px;
}

.lvl {
	align-items: center;
	color: #19b33c;
	display: flex;
	flex-direction: column;
	font-size: 9px;
	font-weight: bold;
	line-height: 9px;
}

.meter {
	background: #fff;
	border: 1px solid #999;
	height: 19px;
	margin-left: -8px;
	width: 56px;
}

.meter span {
	background: #40e040;
	display: block;
	height: 100%;
	width: 35%;
}


/* Left panels */

main {
	border-top: 1px solid #aaa;
	display: flex;
	flex: 1;
	min-height: 0;
}

aside {
	border-right: 1px solid #888;
	display: flex;
	flex: none;
	flex-direction: column;
	padding: 3px 5px 0;
	width: 309px;
}

.panel {
	display: flex;
	flex-direction: column;
}

.market-watch {
	border-bottom: 1px solid #bbb;
	height: 406px;
	margin: 0 -5px;
	padding: 0 5px 8px;
}

.navigator {
	flex: 1;
	min-height: 0;
	padding: 3px 0 8px;
}

.panel h2 {
	align-items: center;
	display: flex;
	flex: none;
	font-family: "DejaVu Sans Condensed", "DejaVu Sans", sans-serif;
	font-size: 13px;
	height: 16px;
	line-height: 16px;
}

.panel h2 span {
	background: linear-gradient(90deg, #9db7d6, #b9d1ea);
	flex: 1;
	padding-left: 4px;
}

.market-watch h2 span {
	background: linear-gradient(90deg, #bfcddb, #c2d8f0);
}

.panel h2 button {
	padding: 3px 2px 3px 8px;
}

.watch-body {
	background: #fff;
	border-left: 1px solid #aaa;
	border-top: 1px solid #aaa;
	display: flex;
	flex: 1;
	margin-top: 1px;
	min-height: 0;
}

.watch-scroll {
	flex: 1;
	overflow: hidden;
}

table {
	border-collapse: collapse;
	table-layout: fixed;
	width: 100%;
}

th {
	font-weight: normal;
	height: 26px;
	padding: 0 6px 0 0;
	text-align: right;
	width: 55px;
}

th + th {
	border-left: 1px solid #ddd;
}

th.symbol {
	padding-left: 6px;
	text-align: left;
	width: 109px;
}

td {
	background: #ffe4b5;
	border-bottom: 1px solid #c8c8c8;
	border-left: 1px solid #c8c8c8;
	height: 25px;
	line-height: 20px;
	padding: 0 5px 0 0;
	text-align: right;
}

td.symbol {
	border-left: 0;
	padding-left: 6px;
	text-align: left;
}

td.symbol svg {
	display: inline-block;
	margin-right: 9px;
}

tr.selected td {
	background: #e1f0ff;
}

.red {
	color: #f22;
}

.blue {
	color: #22f;
}

.scrollbar {
	align-items: center;
	background: #f0f0f0;
	display: flex;
	flex-direction: column;
	width: 22px;
}

.scrollbar button {
	height: 21px;
	padding: 0 6px;
}

.thumb {
	background: #cdcdcd;
	height: 131px;
	margin-bottom: auto;
	width: 19px;
}

.panel-tabs {
	border-top: 1px solid #444;
	display: flex;
	flex: none;
	height: 25px;
	padding-left: 2px;
}

.panel-tabs button {
	color: #888;
	line-height: 22px;
	padding: 0 13px;
}

.panel-tabs button + button + button {
	border-left: 1px solid #999;
	height: 18px;
	line-height: 16px;
	margin-top: 4px;
}

.panel-tabs .current, .chart-tabs .current {
	background: #fff;
	border: 1px solid #333;
	border-top: 0;
	color: #222;
}

.tree {
	background: #fff;
	border-left: 1px solid #aaa;
	border-top: 1px solid #ccc;
	flex: 1;
	margin-top: 1px;
	min-height: 0;
	padding: 1px 0 0 5px;
}

.root {
	align-items: center;
	display: flex;
	gap: 6px;
	height: 24px;
}

.tree li {
	align-items: center;
	display: flex;
	height: 24px;
	padding-left: 4px;
	position: relative;
}

/* dotted branch lines */
.tree li::before {
	border-left: 1px dotted #888;
	content: "";
	height: 100%;
	left: 9px;
	position: absolute;
	top: 0;
}

.tree li:last-child::before {
	height: 50%;
}

.tree li::after {
	border-top: 1px dotted #888;
	content: "";
	left: 16px;
	position: absolute;
	width: 7px;
}

.tree li svg {
	margin: 0 4px 0 11px;
}

.tree li span {
	border: 1px dotted transparent;
	padding: 1px 1px;
}

.tree .selected span {
	background: #0078d7;
	border-color: #e08030;
	color: #fff;
}

.tree i {
	height: 11px;
	width: 11px;
}

.tree .leaf::after {
	left: 11px;
	width: 12px;
}

.plus {
	background:
		linear-gradient(#2a4a9a, #2a4a9a) center / 7px 1px no-repeat,
		linear-gradient(#2a4a9a, #2a4a9a) center / 1px 7px no-repeat,
		#f4f4f4;
	border: 1px solid #999;
	position: relative;
	z-index: 1;
}


/* Chart */

.charts {
	display: flex;
	flex: 1;
	flex-direction: column;
	min-width: 0;
	padding-right: 2px;
}

.chart {
	background: #000;
	border-top: 1px solid #555;
	color: #eee;
	flex: 1;
	font: 12px/14px "DejaVu Sans Condensed", "DejaVu Sans", "Noto Sans CJK SC", sans-serif;
	min-height: 0;
	position: relative;
}

#chart {
	height: 100%;
	position: absolute;
	width: 100%;
}

#chart path {
	fill: none;
	shape-rendering: crispEdges;
}

#chart .bar {
	stroke: #0f0;
	stroke-width: 2px;
}

#chart .volume {
	stroke: #2bb52b;
	stroke-width: 2px;
}

#chart .separator {
	stroke: #eee;
	stroke-dasharray: 3 3;
}

#chart .frame {
	stroke: #ddd;
}

#chart .level.sl {
	stroke: #e0502f;
}

#chart .level.tp {
	stroke: #22a022;
}

#chart .sell, #chart .buy {
	shape-rendering: auto;
	stroke: #ff1493;
	stroke-width: 3px;
}

#chart .buy {
	stroke: #00bfff;
}

.axis {
	fill: #ddd;
}

.label {
	font: 13px "Liberation Sans", Arial, sans-serif;
}

.label.sl {
	fill: #e0502f;
}

.label.tp {
	fill: #22a022;
}

.chart-title {
	display: flex;
	gap: 8px;
	left: 9px;
	position: absolute;
	top: 9px;
	white-space: nowrap;
}

.stats {
	left: 37px;
	position: absolute;
	top: 43px;
}

.stats p {
	margin-bottom: 14px;
}

.tooltip {
	background: #fff;
	border: 1px solid #888;
	color: #666;
	font: 14px/20px "Open Sans", "Noto Sans", sans-serif;
	left: 191px;
	padding: 1px 5px 2px;
	position: absolute;
	top: 629px;
}

.chart-tabs {
	border-top: 2px solid #777;
	color: #888;
	display: flex;
	flex: none;
	height: 25px;
	margin-top: 1px;
	padding-left: 2px;
}

.chart-tabs button {
	padding: 0 16px;
	position: relative;
}

.chart-tabs button::after {
	background: #888;
	content: "";
	height: 18px;
	position: absolute;
	right: 0;
	top: 3px;
	width: 1px;
}

.chart-tabs .current::after, .chart-tabs button:nth-child(10)::after {
	display: none;
}

.chart-tabs .current {
	padding: 0 14px;
}

.tab-arrows {
	align-items: center;
	display: flex;
	gap: 21px;
	margin-left: auto;
	padding-right: 14px;
}

.tab-arrows i {
	border: 4px solid transparent;
}

.tab-arrows .prev {
	border-left: 0;
	border-right-color: #aaa;
}

.tab-arrows .next {
	border-left-color: #aaa;
	border-right: 0;
}


/* Status bar */

.statusbar {
	border-top: 1px solid #ccc;
	display: flex;
	flex: none;
	height: 29px;
	line-height: 25px;
	padding-top: 3px;
}

.statusbar span {
	border-left: 1px solid #bbb;
	padding-left: 6px;
	white-space: nowrap;
	width: 87px;
}

.statusbar .help {
	border: 0;
	flex: 1;
	padding-left: 2px;
}

.statusbar .profile-name {
	width: 165px;
}

.statusbar .date {
	width: 125px;
}

.statusbar .traffic {
	align-items: center;
	display: flex;
	gap: 9px;
	width: 144px;
}


/* Windows taskbar */

.taskbar {
	background: #20282d;
	color: #fff;
	display: flex;
	flex: none;
	height: 50px;
}

.taskbar > button {
	align-items: center;
	display: flex;
	justify-content: center;
	width: 62px;
}

.taskbar .start {
	width: 60px;
}

.taskbar .running {
	box-shadow: inset 0 -3px #a9a4ee;
	margin: 0 6px;
	width: 50px;
}

.taskbar .focused {
	background: #4b5257;
	margin: 0;
	width: 62px;
}

.office {
	fill: #fff;
	font: bold 14px "Open Sans", sans-serif;
}

.ps {
	fill: #31a8ff;
	font: bold 14px "Open Sans", sans-serif;
}

.tray {
	align-items: center;
	display: flex;
	gap: 12px;
	margin-left: auto;
}

.clock {
	line-height: 23px;
	margin: 0 10px 0 3px;
	text-align: center;
}

.lang {
	margin-left: 8px;
}

.peek {
	border-left: 1px solid #666;
	height: 50px;
	margin-left: 14px;
	width: 5px;
}
```
